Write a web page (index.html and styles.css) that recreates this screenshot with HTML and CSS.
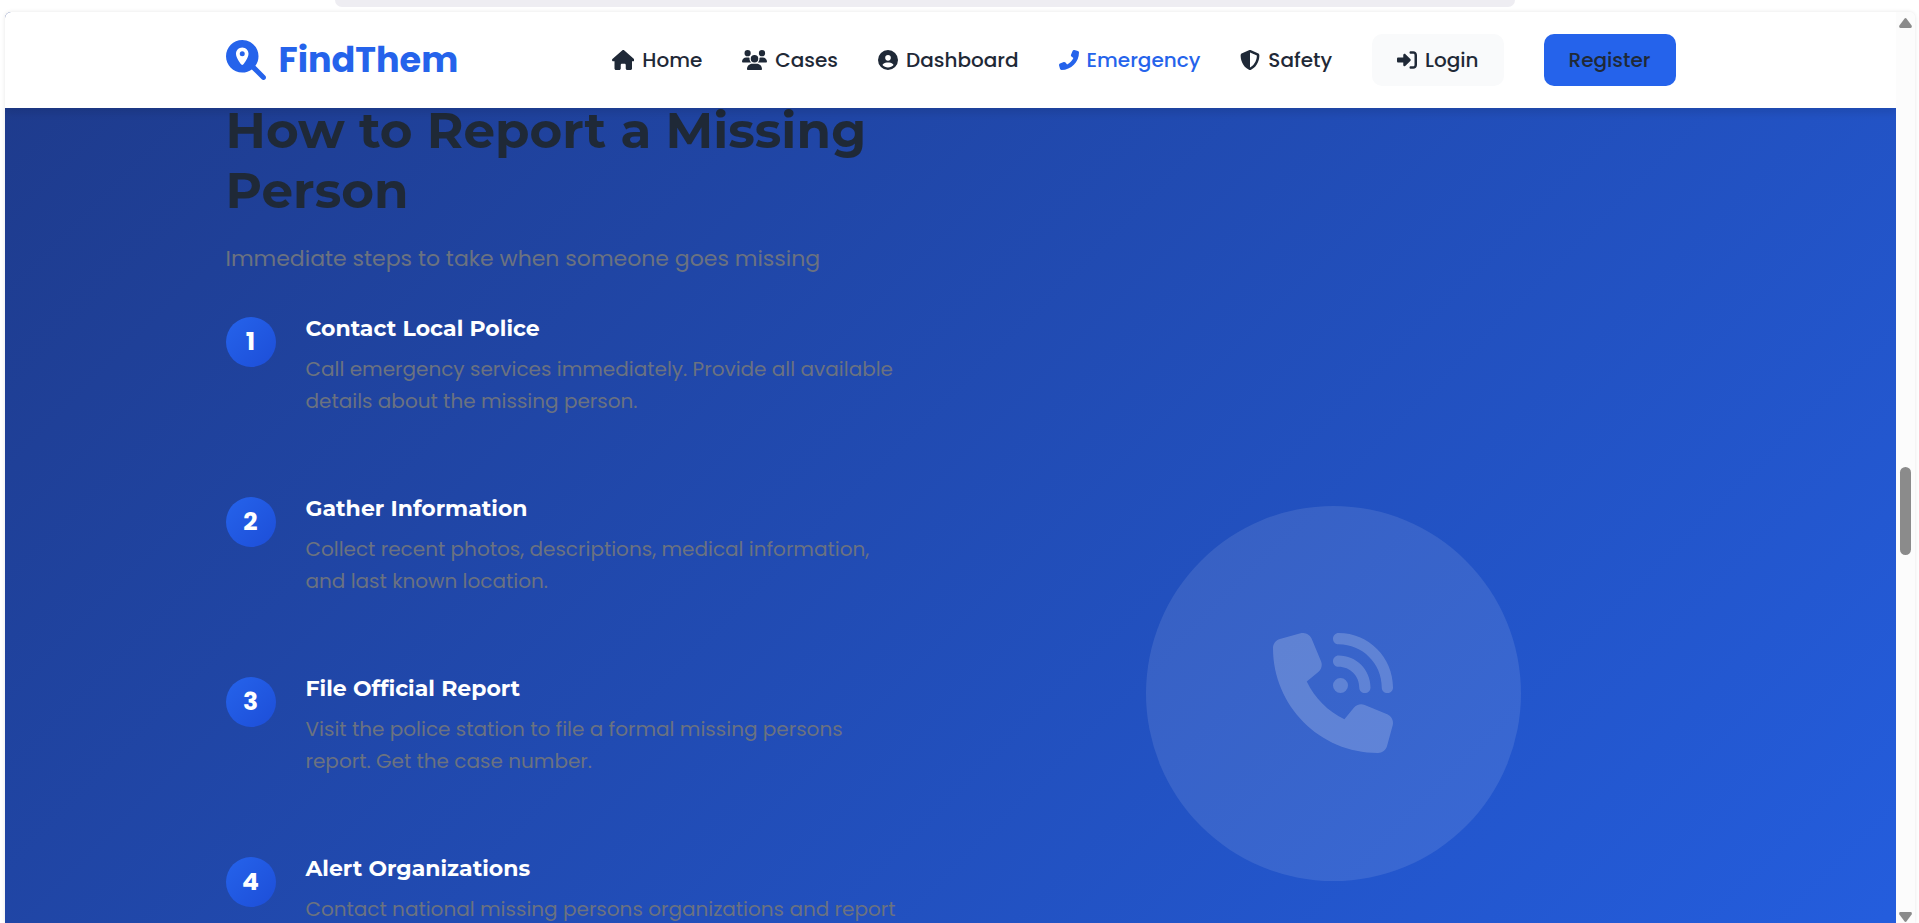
FILE: index.html
```html
<!DOCTYPE html>
<html lang="en">
<head>
    <meta charset="UTF-8">
    <meta name="viewport" content="width=device-width, initial-scale=1.0">
    <title>FindThem - Emergency</title>
    <link rel="stylesheet" href="styles.css">
</head>
<body>
    <div class="toolbar">
        <div class="address-bar"></div>
    </div>

    <div class="window">
        <div class="page">
            <header class="navbar">
                <div class="container nav-container">
                    <a href="#" class="logo">
                        <svg class="logo-icon" viewBox="0 0 512 512"><path d="M416 208c0 45.9-14.9 88.3-40 122.7L502.6 457.4c12.5 12.5 12.5 32.8 0 45.3s-32.8 12.5-45.3 0L330.7 376c-34.4 25.2-76.8 40-122.7 40C93.1 416 0 322.9 0 208S93.1 0 208 0S416 93.1 416 208zM288 176c0-44.2-35.8-80-80-80s-80 35.8-80 80c0 48.8 46.5 111.6 68.6 138.6c6 7.3 16.8 7.3 22.7 0c22.1-27 68.6-89.8 68.6-138.6zm-112 0a32 32 0 1 1 64 0 32 32 0 1 1 -64 0z"/></svg>
                        <span>FindThem</span>
                    </a>
                    <nav class="nav-menu">
                        <a href="#" class="nav-link">
                            <svg class="icon" viewBox="0 0 576 512"><path d="M575.8 255.5c0 18-15 32.1-32 32.1l-32 0 .7 160.2c0 2.7-.2 5.4-.5 8.1l0 16.2c0 22.1-17.9 40-40 40l-16 0c-1.1 0-2.2 0-3.3-.1c-1.4 .1-2.8 .1-4.2 .1L416 512l-24 0c-22.1 0-40-17.9-40-40l0-24 0-64c0-17.7-14.3-32-32-32l-64 0c-17.7 0-32 14.3-32 32l0 64 0 24c0 22.1-17.9 40-40 40l-24 0-31.9 0c-1.5 0-3-.1-4.5-.2c-1.2 .1-2.4 .2-3.6 .2l-16 0c-22.1 0-40-17.9-40-40l0-112c0-.9 0-1.9 .1-2.8l0-69.7-32 0c-18 0-32-14-32-32.1c0-9 3-17 10-24L266.4 8c7-7 15-8 22-8s15 2 21 7L564.8 231.5c8 7 12 15 11 24z"/></svg>
                            Home
                        </a>
                        <a href="#" class="nav-link">
                            <svg class="icon" viewBox="0 0 640 512"><path d="M144 0a80 80 0 1 1 0 160A80 80 0 1 1 144 0zM512 0a80 80 0 1 1 0 160A80 80 0 1 1 512 0zM0 298.7C0 239.8 47.8 192 106.7 192l42.7 0c15.9 0 31 3.5 44.6 9.7c-1.3 7.2-1.9 14.7-1.9 22.3c0 38.2 16.8 72.5 43.3 96c-.2 0-.4 0-.7 0L21.3 320C9.6 320 0 310.4 0 298.7zM405.3 320c-.2 0-.4 0-.7 0c26.6-23.5 43.3-57.8 43.3-96c0-7.6-.7-15-1.9-22.3c13.6-6.3 28.7-9.7 44.6-9.7l42.7 0C592.2 192 640 239.8 640 298.7c0 11.8-9.6 21.3-21.3 21.3l-213.3 0zM224 224a96 96 0 1 1 192 0 96 96 0 1 1 -192 0zM128 485.3C128 411.7 187.7 352 261.3 352l117.3 0C452.3 352 512 411.7 512 485.3c0 14.7-11.9 26.7-26.7 26.7l-330.7 0c-14.7 0-26.7-11.9-26.7-26.7z"/></svg>
                            Cases
                        </a>
                        <a href="#" class="nav-link">
                            <svg class="icon" viewBox="0 0 512 512"><path d="M399 384.2C376.9 345.8 335.4 320 288 320l-64 0c-47.4 0-88.9 25.8-111 64.2c35.2 39.2 86.2 63.8 143 63.8s107.8-24.7 143-63.8zM0 256a256 256 0 1 1 512 0A256 256 0 1 1 0 256zm256 16a72 72 0 1 0 0-144 72 72 0 1 0 0 144z"/></svg>
                            Dashboard
                        </a>
                        <a href="#" class="nav-link active">
                            <svg class="icon" viewBox="0 0 512 512"><path d="M347.1 24.6c7.7-18.6 28-28.5 47.4-23.2l88 24C499.9 30.2 512 46 512 64c0 247.4-200.6 448-448 448c-18 0-33.8-12.1-38.6-29.5l-24-88c-5.3-19.4 4.6-39.7 23.2-47.4l96-40c16.3-6.8 35.2-2.1 46.3 11.6L207.3 368c70.4-33.3 127.4-90.3 160.7-160.7L318.7 167c-13.7-11.2-18.4-30-11.6-46.3l40-96z"/></svg>
                            Emergency
                        </a>
                        <a href="#" class="nav-link">
                            <svg class="icon" viewBox="0 0 512 512"><path d="M256 0c4.6 0 9.2 1 13.4 2.9L457.7 82.8c22 9.3 38.4 31 38.3 57.2c-.5 99.2-41.3 280.7-213.6 363.2c-16.7 8-36.1 8-52.8 0C57.3 420.7 16.5 239.2 16 140c-.1-26.2 16.3-47.9 38.3-57.2L242.7 2.9C246.8 1 251.4 0 256 0zm0 66.8l0 378.1C394 378 431.1 230.1 432 141.4L256 66.8s0 0 0 0z"/></svg>
                            Safety
                        </a>
                        <a href="#" class="nav-link btn-login">
                            <svg class="icon" viewBox="0 0 512 512"><path d="M217.9 105.9L340.7 228.7c7.2 7.2 11.3 17.1 11.3 27.3s-4.1 20.1-11.3 27.3L217.9 406.1c-6.4 6.4-15 9.9-24 9.9c-18.7 0-33.9-15.2-33.9-33.9l0-62.1L32 320c-17.7 0-32-14.3-32-32l0-64c0-17.7 14.3-32 32-32l128 0 0-62.1c0-18.7 15.2-33.9 33.9-33.9c9 0 17.6 3.6 24 9.9zM352 416l64 0c17.7 0 32-14.3 32-32l0-256c0-17.7-14.3-32-32-32l-64 0c-17.7 0-32-14.3-32-32s14.3-32 32-32l64 0c53 0 96 43 96 96l0 256c0 53-43 96-96 96l-64 0c-17.7 0-32-14.3-32-32s14.3-32 32-32z"/></svg>
                            Login
                        </a>
                        <a href="#" class="nav-link btn-register">Register</a>
                    </nav>
                </div>
            </header>

            <section class="report-section">
                <div class="container report-grid">
                    <div class="report-content">
                        <h2>How to Report a Missing Person</h2>
                        <p class="subtitle">Immediate steps to take when someone goes missing</p>

                        <div class="steps">
                            <div class="step">
                                <div class="step-number">1</div>
                                <div class="step-text">
                                    <h3>Contact Local Police</h3>
                                    <p>Call emergency services immediately. Provide all available details about the missing person.</p>
                                </div>
                            </div>
                            <div class="step">
                                <div class="step-number">2</div>
                                <div class="step-text">
                                    <h3>Gather Information</h3>
                                    <p>Collect recent photos, descriptions, medical information, and last known location.</p>
                                </div>
                            </div>
                            <div class="step">
                                <div class="step-number">3</div>
                                <div class="step-text">
                                    <h3>File Official Report</h3>
                                    <p>Visit the police station to file a formal missing persons report. Get the case number.</p>
                                </div>
                            </div>
                            <div class="step">
                                <div class="step-number">4</div>
                                <div class="step-text">
                                    <h3>Alert Organizations</h3>
                                    <p>Contact national missing persons organizations and report</p>
                                </div>
                            </div>
                        </div>
                    </div>

                    <div class="report-visual">
                        <div class="phone-circle">
                            <svg viewBox="0 0 512 512"><path d="M280 0C408.1 0 512 103.9 512 232c0 13.3-10.7 24-24 24s-24-10.7-24-24c0-101.6-82.4-184-184-184c-13.3 0-24-10.7-24-24s10.7-24 24-24zm8 192a32 32 0 1 1 0 64 32 32 0 1 1 0-64zm-32-72c0-13.3 10.7-24 24-24c75.1 0 136 60.9 136 136c0 13.3-10.7 24-24 24s-24-10.7-24-24c0-48.6-39.4-88-88-88c-13.3 0-24-10.7-24-24zM117.5 1.4c19.4-5.3 39.7 4.6 47.4 23.2l40 96c6.8 16.3 2.1 35.2-11.6 46.3L144 207.3c33.3 70.4 90.3 127.4 160.7 160.7L345 318.7c11.2-13.7 30-18.4 46.3-11.6l96 40c18.6 7.7 28.5 28 23.2 47.4l-24 88C481.8 499.9 466 512 448 512C200.6 512 0 311.4 0 64C0 46 12.1 30.2 29.5 25.4l88-24z"/></svg>
                        </div>
                    </div>
                </div>
            </section>
        </div>

        <div class="scrollbar">
            <svg class="scroll-arrow" viewBox="0 0 13 10"><path d="M5.4 .8Q6.5-.6 7.6 .8L12.6 7.6Q13.4 10 11.6 10H1.4Q-.4 10 .4 7.6Z"/></svg>
            <div class="scroll-track">
                <div class="scroll-thumb"></div>
            </div>
            <svg class="scroll-arrow" viewBox="0 0 13 10"><path d="M5.4 9.2Q6.5 10.6 7.6 9.2L12.6 2.4Q13.4 0 11.6 0H1.4Q-.4 0 .4 2.4Z"/></svg>
        </div>
    </div>
</body>
</html>
```
FILE: styles.css
```css
* {
    margin: 0;
    padding: 0;
    box-sizing: border-box;
}
body {
    font-family: Poppins, Inter, sans-serif;
    font-size: 20px;
    line-height: 32px;
    color: #1f2937;
    background: #fff;
    height: 100vh;
    overflow: hidden;
    display: flex;
    flex-direction: column;
}

/* browser toolbar */
.toolbar {
    flex: none;
    height: 12px;
    display: flex;
    justify-content: center;
    padding-right: 69px;
}
.address-bar {
    width: 63.8%;
    height: 7px;
    background: #eeedf2;
    border-radius: 0 0 10px 10px;
}
.window {
    flex: 1;
    min-height: 0;
    margin: 0 4px 0 5px;
    display: flex;
    overflow: hidden;
    border-radius: 6px 6px 0 0;
    box-shadow: 0 0 4px rgba(0, 0, 0, 0.1);
}
.page {
    flex: 1;
    overflow: hidden;
}
.container {
    max-width: 1500px;
    margin: 0 auto;
    padding: 0 25px;
}

/* navbar */
.navbar {
    position: relative;
    z-index: 10;
    height: 96px;
    background: #fff;
    box-shadow: 0 5px 8px rgba(0, 0, 0, 0.1);
}
.nav-container {
    height: 100%;
    display: flex;
    align-items: center;
    justify-content: space-between;
}
.logo {
    display: flex;
    align-items: center;
    gap: 13px;
    font-size: 35px;
    font-weight: 700;
    color: #2563eb;
    text-decoration: none;
}
.logo-icon {
    width: 40px;
    height: 40px;
    fill: currentColor;
}
.nav-menu {
    display: flex;
    align-items: center;
    gap: 40px;
}
.nav-link {
    display: flex;
    align-items: center;
    gap: 8px;
    font-weight: 500;
    color: #1f2937;
    text-decoration: none;
}
.nav-link.active {
    color: #2563eb;
}
.icon {
    height: 20px;
    fill: currentColor;
}
.btn-login,
.btn-register {
    padding: 10px 25px;
    border-radius: 10px;
    background: #f9fafb;
}
.btn-register {
    background: #2563eb;
}

/* report steps */
.report-section {
    margin-top: -108px;
    padding: 101px 0;
    background: linear-gradient(135deg, #1e3a8a, #2563eb);
}
.report-grid {
    min-height: 1184px;
    display: grid;
    grid-template-columns: 1fr 1fr;
    gap: 80px;
}
h2 {
    font-family: Montserrat, Inter, sans-serif;
    font-size: 50px;
    line-height: 60px;
    font-weight: 700;
    margin-bottom: 20px;
}
.subtitle {
    font-size: 22px;
    line-height: 36px;
    color: #6b7280;
    margin-bottom: 40px;
}
.steps {
    display: flex;
    flex-direction: column;
}
.step {
    display: flex;
    gap: 30px;
    min-height: 180px;
}
.step-number {
    flex: none;
    width: 50px;
    height: 50px;
    border-radius: 50%;
    display: flex;
    align-items: center;
    justify-content: center;
    background: linear-gradient(135deg, #2563eb, #1d4ed8);
    color: #fff;
    font-size: 25px;
    font-weight: 700;
}
.step-text h3 {
    font-family: Montserrat, Inter, sans-serif;
    font-size: 22px;
    line-height: 24px;
    font-weight: 700;
    color: #fff;
    margin-bottom: 12px;
}
.step-text p {
    color: #6b7280;
}
.report-visual {
    display: flex;
    align-items: center;
    justify-content: center;
}
.phone-circle {
    width: 375px;
    height: 375px;
    border-radius: 50%;
    display: flex;
    align-items: center;
    justify-content: center;
    background: rgba(255, 255, 255, 0.1);
}
.phone-circle svg {
    width: 120px;
    height: 120px;
    fill: rgba(255, 255, 255, 0.2);
}

/* scrollbar */
.scrollbar {
    flex: none;
    width: 19px;
    padding: 6px 3px 1px;
    display: flex;
    flex-direction: column;
    align-items: center;
    background: #fcfcfc;
}
.scroll-arrow {
    flex: none;
    width: 13px;
    height: 10px;
    fill: #8b8b8b;
}
.scroll-track {
    flex: 1;
    display: flex;
    flex-direction: column;
}
.scroll-track::before {
    content: "";
    flex: 439;
}
.scroll-track::after {
    content: "";
    flex: 357;
}
.scroll-thumb {
    width: 11px;
    height: 88px;
    border-radius: 6px;
    background: #8b8b8b;
}
```
